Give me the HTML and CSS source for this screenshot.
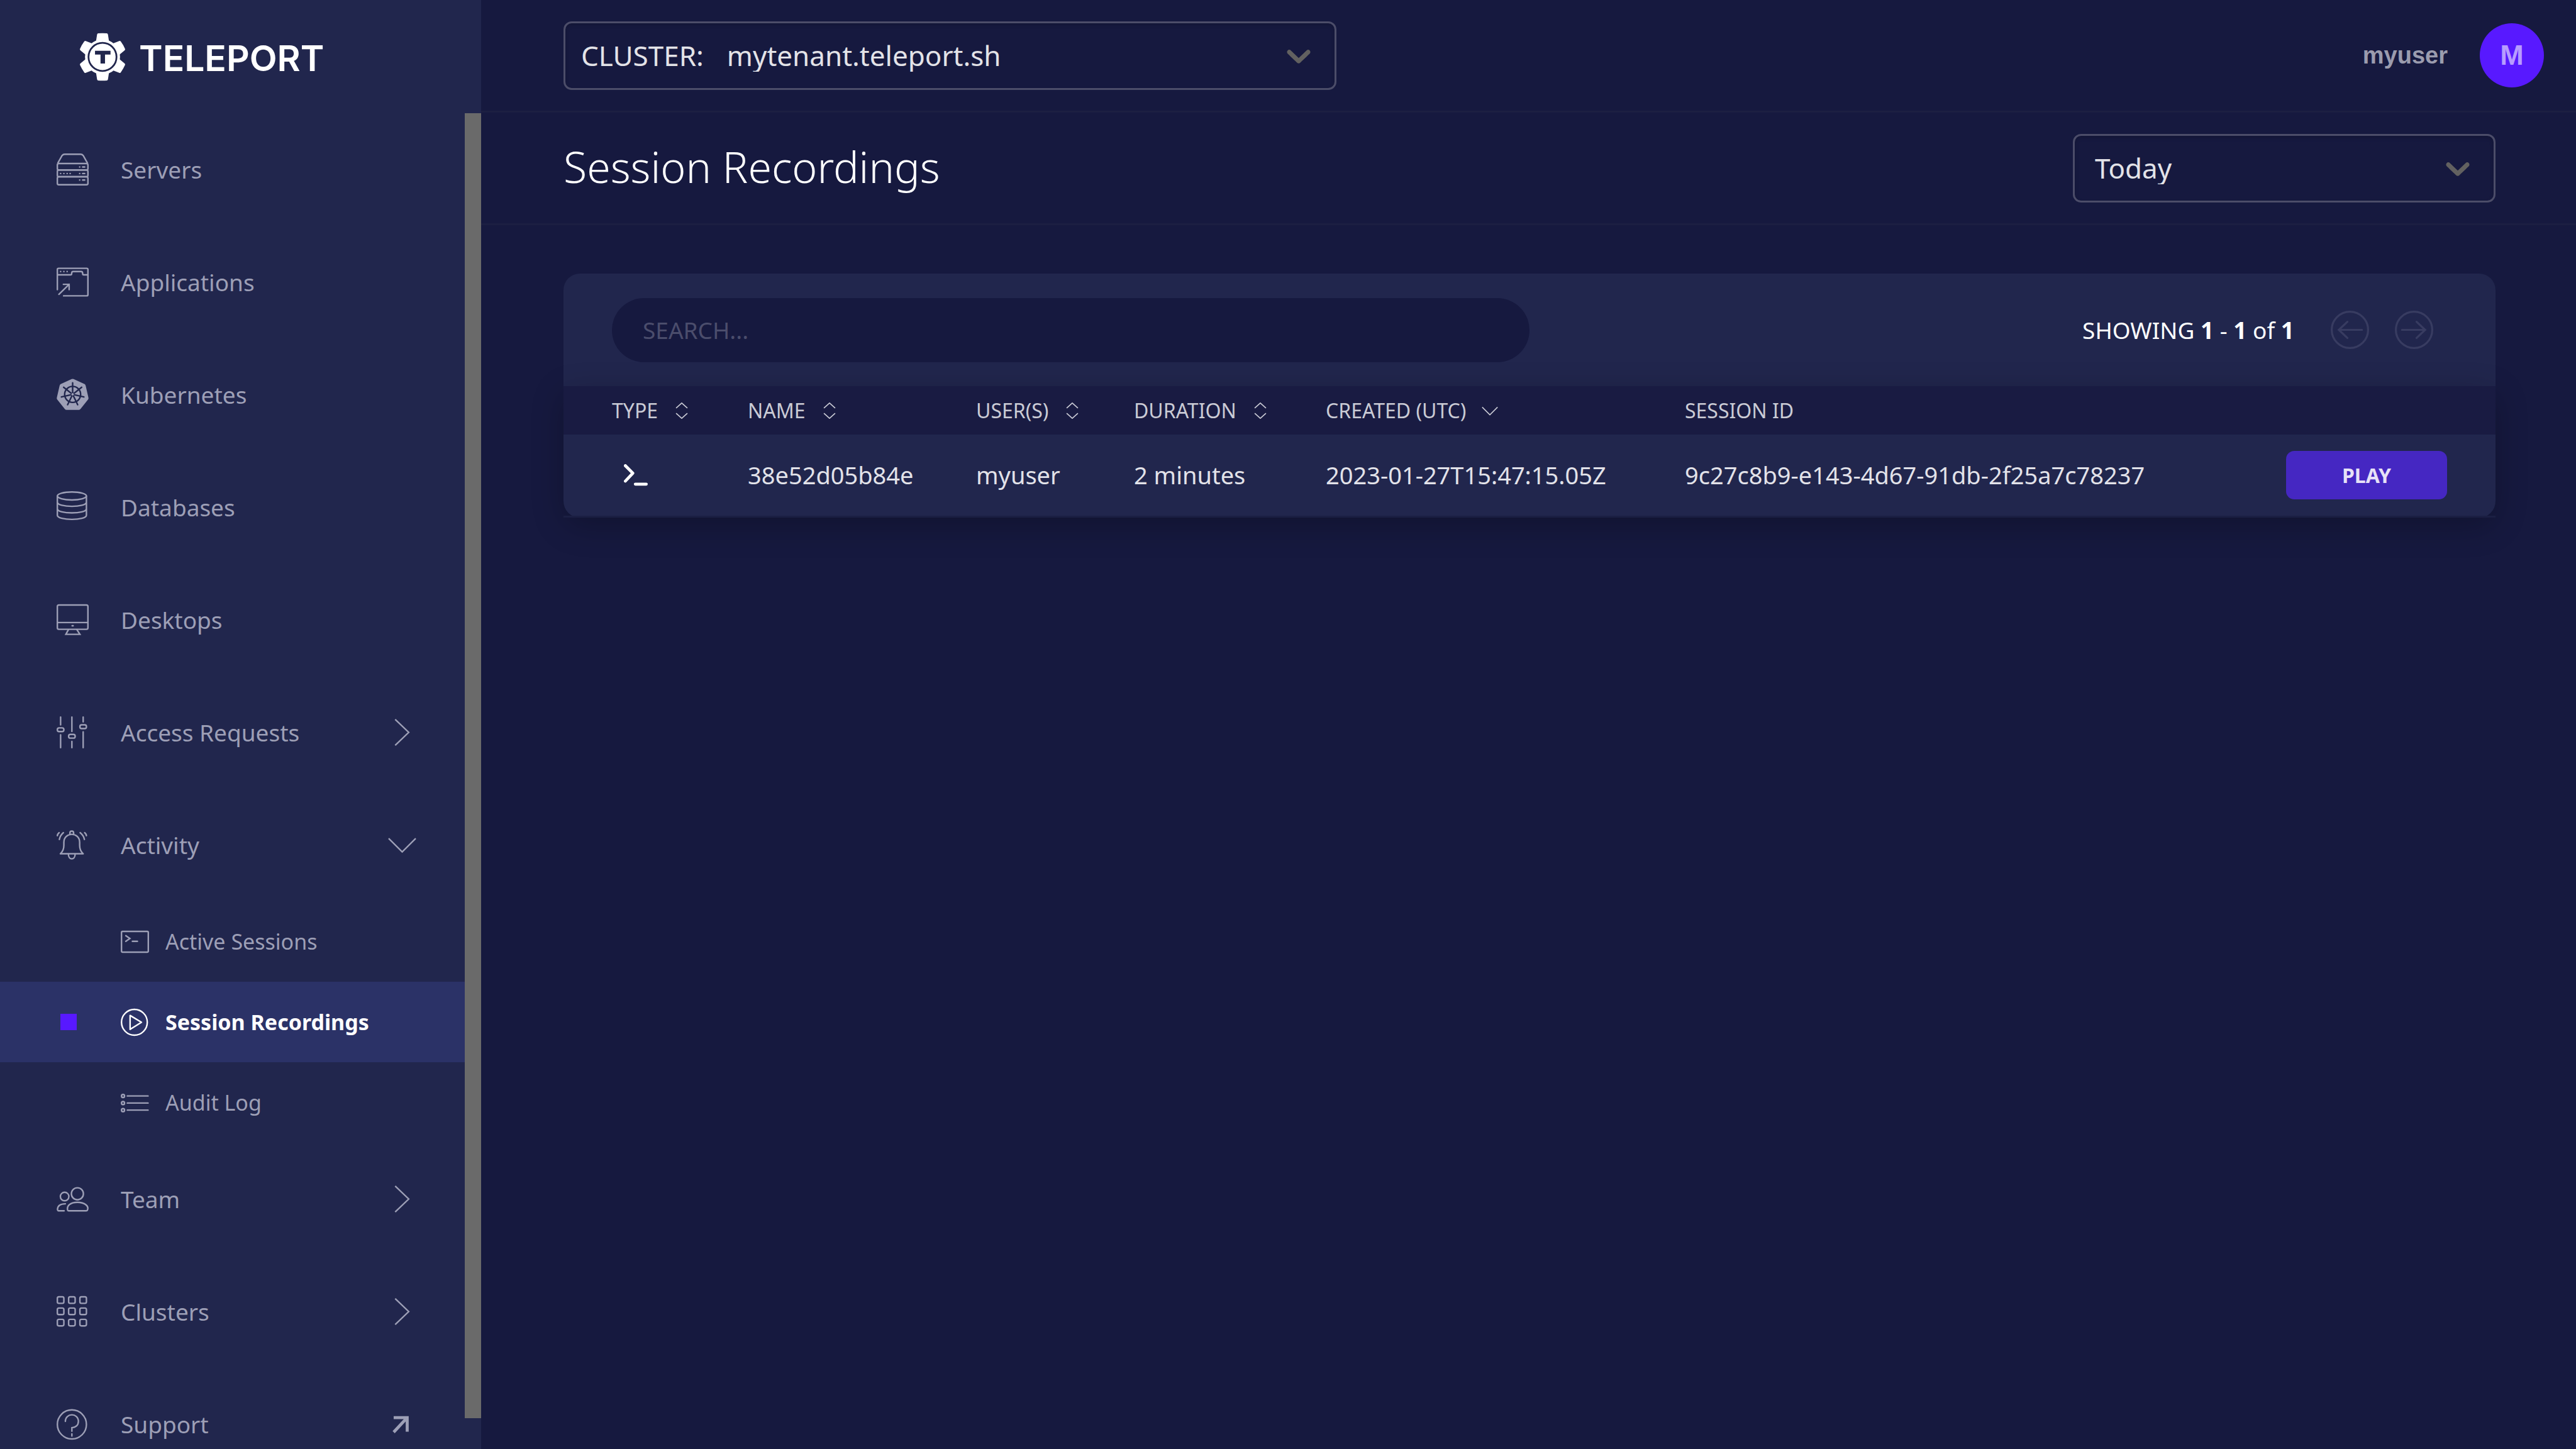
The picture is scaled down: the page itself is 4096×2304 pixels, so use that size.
FILE: index.html
```html
<!DOCTYPE html>
<html lang="en">
<head>
<meta charset="utf-8">
<title>Session Recordings</title>
<link rel="stylesheet" href="styles.css">
</head>
<body>
<div class="app">
  <aside class="sidebar">
    <a class="brand" href="#">
      <svg class="brand-mark" viewBox="0 0 88 94" aria-hidden="true">
        <g fill="#fff">
          <circle cx="44" cy="47" r="35"/>
          <path d="M35 0 Q44 -1 53 0 Q55 1 55 3 L57 16 H31 L33 3 Q33 1 35 0Z"/>
          <path d="M35 0 Q44 -1 53 0 Q55 1 55 3 L57 16 H31 L33 3 Q33 1 35 0Z" transform="rotate(60 44 47)"/>
          <path d="M35 0 Q44 -1 53 0 Q55 1 55 3 L57 16 H31 L33 3 Q33 1 35 0Z" transform="rotate(120 44 47)"/>
          <path d="M35 0 Q44 -1 53 0 Q55 1 55 3 L57 16 H31 L33 3 Q33 1 35 0Z" transform="rotate(180 44 47)"/>
          <path d="M35 0 Q44 -1 53 0 Q55 1 55 3 L57 16 H31 L33 3 Q33 1 35 0Z" transform="rotate(240 44 47)"/>
          <path d="M35 0 Q44 -1 53 0 Q55 1 55 3 L57 16 H31 L33 3 Q33 1 35 0Z" transform="rotate(300 44 47)"/>
        </g>
        <circle cx="44" cy="47" r="28" fill="none" stroke="#21264d" stroke-width="3.500"/>
        <path d="M29 34.700H60V42.300H49V60.300H40V42.300H29Z" fill="#21264d"/>
      </svg>
      <span class="brand-name">TELEPORT</span>
    </a>
    <div class="sidebar-body">
      <nav class="nav">
        <a class="nav-item" href="#">
          <svg class="icon" viewBox="0 0 64 64"><path d="M2 20 L11 4 Q13 1.500 16 1.500 H48 Q51 1.500 53 4 L62 20"/><rect x="1.500" y="20" width="61" height="13" rx="3"/><rect x="1.500" y="33" width="61" height="13.500" rx="3"/><rect x="1.500" y="46.500" width="61" height="16" rx="3"/><path stroke-linecap="round" d="M46 27h.1M52 27h4M46 40h.1M52 40h4M46 53h.1M52 53h4M8 40h.1M14.500 40h.1M21 40h.1M27 40h.1"/></svg>
          <span class="nav-label">Servers</span>
        </a>
        <a class="nav-item" href="#">
          <svg class="icon" viewBox="0 -3 64 64"><path stroke-linecap="round" d="M1.500 44 V4 Q1.500 1.500 4 1.500 H60 Q62.500 1.500 62.500 4 V54 Q62.500 56.500 60 56.500 H14 M2 14.500 H28 Q30 14.500 30 12 Q30 8 33 8 H49 Q52 8 52 12 Q52 14.500 54 14.500 H62 M4.500 53.500 L25 33.500 M13.500 33.500 H25 V44 M8 8h.1M14.500 8h.1M21 8h.1"/></svg>
          <span class="nav-label">Applications</span>
        </a>
        <a class="nav-item" href="#">
          <svg class="icon" viewBox="0 0 64 64"><path class="solid" d="M30 1 Q32 0 34 1 L56 11 Q57.500 12 58 14 L63.500 38 Q64 40 63 41.500 L47.500 61 Q46 62.500 44 62.500 H20 Q18 62.500 16.500 61 L1 41.500 Q0 40 .5 38 L6 14 Q6.500 12 8 11Z"/><g stroke="#21264d"><circle cx="32" cy="31.500" r="16"/><path stroke-linecap="round" d="M32 31.500V8.500M32 31.500L50 17.200M32 31.500L54.400 36.600M32 31.500L42 52.200M32 31.500L22 52.200M32 31.500L9.600 36.600M32 31.500L14 17.200"/></g><circle class="solid" cx="32" cy="31.500" r="2.500"/></svg>
          <span class="nav-label">Kubernetes</span>
        </a>
        <a class="nav-item" href="#">
          <svg class="icon" viewBox="0 0 64 64"><ellipse cx="30.500" cy="9.500" rx="29" ry="8"/><path d="M1.500 9.500V48C1.500 59 59.500 59 59.500 48V9.500M1.500 22C1.500 33 59.500 33 59.500 22M1.500 35C1.500 46 59.500 46 59.500 35"/></svg>
          <span class="nav-label">Databases</span>
        </a>
        <a class="nav-item" href="#">
          <svg class="icon" viewBox="0 -1 64 64"><rect x="1.500" y="1.500" width="61" height="48.500" rx="3"/><path d="M2 36.500H62M24 50L18.500 60H46.500L40 50"/><path stroke-linecap="round" d="M31 43h2"/></svg>
          <span class="nav-label">Desktops</span>
        </a>
        <button class="nav-item" type="button">
          <svg class="icon" viewBox="0 0 64 64"><path stroke-linecap="round" d="M8 1.500V17M8 37V62.500M30.500 1.500V30M30.500 50V62.500M53 1.500V11M53 31V62.500"/><rect x="1.500" y="23" width="13" height="7.500" rx="3.500"/><rect x="24" y="36" width="13" height="7.500" rx="3.500"/><rect x="46.500" y="17" width="13" height="7.500" rx="3.500"/></svg>
          <span class="nav-label">Access Requests</span>
          <svg class="icon" viewBox="0 0 64 64"><path d="M18 6L45 32L18 58"/></svg>
        </button>
        <button class="nav-item" type="button" aria-expanded="true">
          <svg class="icon" viewBox="0 -3 64 64"><path stroke-linecap="round" d="M7.500 46.500H53M8 46Q14.500 40 14.500 30V24C14.500 2.500 46 2.500 46 24V30Q46 40 52.500 46M26.500 8V5.500C26.500 0 34 0 34 5.500V8M23.500 47C23.500 60 37 60 37 47M13.500 4.500Q7 10 5.500 18M5 4.500Q2 7 1.500 10.500M47 4.500Q54 10 55.500 18M56 4.500Q59 7 59.500 10.500"/></svg>
          <span class="nav-label">Activity</span>
          <svg class="icon" viewBox="0 0 64 64"><path d="M5 19L32 46L59 19"/></svg>
        </button>
        <div class="subnav">
          <a class="sub-item" href="#">
            <svg class="icon-small" viewBox="0 -6 56 56"><rect x="1.500" y="1.500" width="53" height="41" rx="2"/><path stroke-linecap="round" d="M10 10L18 15.500L10 21M23 21H33"/></svg>
            <span>Active Sessions</span>
          </a>
          <a class="sub-item is-active" href="#" aria-current="page">
            <svg class="icon-small" viewBox="0 0 56 56"><circle cx="27" cy="28" r="25.500"/><path stroke-linejoin="round" d="M18.500 14.500V42L41 28Z"/></svg>
            <span>Session Recordings</span>
          </a>
          <a class="sub-item" href="#">
            <svg class="icon-small" viewBox="0 -10 56 56"><circle cx="4.500" cy="4.500" r="3"/><circle cx="4.500" cy="18.500" r="3"/><circle cx="4.500" cy="32.500" r="3"/><path stroke-linecap="round" d="M13 4.500H54M13 18.500H54M13 32.500H54"/></svg>
            <span>Audit Log</span>
          </a>
        </div>
        <button class="nav-item" type="button">
          <svg class="icon" viewBox="0 -8 64 64"><circle cx="41.500" cy="13.500" r="12"/><circle cx="16" cy="19" r="8.500"/><path stroke-linecap="round" d="M22 46C20 38 27 30.500 41.500 30.500S65 38 61.500 46Q61 47.500 59 47.500H24Q22.500 47.500 22 46ZM15 47.500H4Q2 47.500 1.800 45Q2 33.500 17.500 33.500"/></svg>
          <span class="nav-label">Team</span>
          <svg class="icon" viewBox="0 0 64 64"><path d="M18 6L45 32L18 58"/></svg>
        </button>
        <button class="nav-item" type="button">
          <svg class="icon" viewBox="0 -1 64 64"><rect x="1.500" y="1.500" width="13" height="13" rx="3"/><rect x="24" y="1.500" width="13" height="13" rx="3"/><rect x="46.500" y="1.500" width="13" height="13" rx="3"/><rect x="1.500" y="24" width="13" height="13" rx="3"/><rect x="24" y="24" width="13" height="13" rx="3"/><rect x="46.500" y="24" width="13" height="13" rx="3"/><rect x="1.500" y="46.500" width="13" height="13" rx="3"/><rect x="24" y="46.500" width="13" height="13" rx="3"/><rect x="46.500" y="46.500" width="13" height="13" rx="3"/></svg>
          <span class="nav-label">Clusters</span>
          <svg class="icon" viewBox="0 0 64 64"><path d="M18 6L45 32L18 58"/></svg>
        </button>
        <a class="nav-item" href="#">
          <svg class="icon" viewBox="0 -2 64 64"><circle cx="30.500" cy="30.500" r="29"/><path stroke-linecap="round" d="M17.500 24.500C17.500 7 43.500 7 43.500 24.500C43.500 33 37 36.500 30.500 37V44M30.500 49.500V53.500"/></svg>
          <span class="nav-label">Support</span>
          <svg class="icon" viewBox="0 0 64 64"><path stroke-width="6" d="M15 19H42V47M42 19L15 48"/></svg>
        </a>
      </nav>
      <div class="scroll-track"><div class="scroll-thumb"></div></div>
    </div>
  </aside>

  <main class="main">
    <header class="topbar">
      <div class="select-box cluster-box">
        <label for="cluster">CLUSTER:</label>
        <select id="cluster"><option>mytenant.teleport.sh</option></select>
        <svg class="select-arrow" viewBox="0 0 20 20"><path d="M4.516 7.548c0.436-0.446 1.043-0.481 1.576 0l3.908 3.747 3.908-3.747c0.533-0.481 1.141-0.446 1.574 0 0.436 0.445 0.408 1.197 0 1.615-0.406 0.418-4.695 4.502-4.695 4.502-0.217 0.223-0.502 0.335-0.787 0.335s-0.570-0.112-0.789-0.335c0 0-4.287-4.084-4.695-4.502s-0.436-1.170 0-1.615z"/></svg>
      </div>
      <button class="user" type="button">
        <span>myuser</span>
        <span class="avatar">M</span>
      </button>
    </header>

    <div class="page-head">
      <h1>Session Recordings</h1>
      <div class="select-box range-box">
        <select aria-label="Time range"><option>Today</option></select>
        <svg class="select-arrow" viewBox="0 0 20 20"><path d="M4.516 7.548c0.436-0.446 1.043-0.481 1.576 0l3.908 3.747 3.908-3.747c0.533-0.481 1.141-0.446 1.574 0 0.436 0.445 0.408 1.197 0 1.615-0.406 0.418-4.695 4.502-4.695 4.502-0.217 0.223-0.502 0.335-0.787 0.335s-0.570-0.112-0.789-0.335c0 0-4.287-4.084-4.695-4.502s-0.436-1.170 0-1.615z"/></svg>
      </div>
    </div>

    <section class="content">
      <div class="panel">
        <input class="search" type="text" placeholder="SEARCH..." aria-label="Search">
        <div class="pager">
          <span class="pager-text">SHOWING <b>1</b> - <b>1</b> of <b>1</b></span>
          <button class="pager-btn" type="button" aria-label="Previous page" disabled>
            <svg viewBox="0 0 76 76"><circle cx="38" cy="38" r="36"/><path d="M62 38H16M33 22L16 38L33 54"/></svg>
          </button>
          <button class="pager-btn" type="button" aria-label="Next page" disabled>
            <svg viewBox="0 0 76 76"><circle cx="38" cy="38" r="36"/><path d="M14 38H60M43 22L60 38L43 54"/></svg>
          </button>
        </div>
      </div>
      <table class="grid">
        <colgroup>
          <col class="col-type"><col class="col-name"><col class="col-users"><col class="col-duration"><col class="col-created"><col><col class="col-action">
        </colgroup>
        <thead>
          <tr>
            <th><span class="sort">TYPE<svg viewBox="0 0 32 32"><path d="M5 11L16 1L27 11M5 21L16 31L27 21"/></svg></span></th>
            <th><span class="sort">NAME<svg viewBox="0 0 32 32"><path d="M5 11L16 1L27 11M5 21L16 31L27 21"/></svg></span></th>
            <th><span class="sort">USER(S)<svg viewBox="0 0 32 32"><path d="M5 11L16 1L27 11M5 21L16 31L27 21"/></svg></span></th>
            <th><span class="sort">DURATION<svg viewBox="0 0 32 32"><path d="M5 11L16 1L27 11M5 21L16 31L27 21"/></svg></span></th>
            <th><span class="sort">CREATED (UTC)<svg viewBox="0 0 32 32"><path d="M1 9L16 24L31 9"/></svg></span></th>
            <th>SESSION ID</th>
            <th></th>
          </tr>
        </thead>
        <tbody>
          <tr>
            <td><svg class="type-icon" viewBox="0 0 48 44" role="img" aria-label="SSH session"><path d="M3 3L18 18L3 34M23 40H45"/></svg></td>
            <td>38e52d05b84e</td>
            <td>myuser</td>
            <td>2 minutes</td>
            <td>2023-01-27T15:47:15.05Z</td>
            <td>9c27c8b9-e143-4d67-91db-2f25a7c78237</td>
            <td><button class="play" type="button">PLAY</button></td>
          </tr>
        </tbody>
      </table>
    </section>
  </main>
</div>
</body>
</html>
```
FILE: styles.css
```css
* {
  box-sizing: border-box;
}

body {
  margin: 0;
  background: #16193f;
  color: #fff;
  font-family: "Noto Sans", "Open Sans", sans-serif;
  font-size: 37px;
  line-height: 51px;
}

button,
input,
select {
  margin: 0;
  padding: 0;
  border: 0;
  background: none;
  color: inherit;
  font: inherit;
}

a {
  color: inherit;
  text-decoration: none;
}

.app {
  display: flex;
  height: 100vh;
  overflow: hidden;
}

/* Sidebar */

.sidebar {
  display: flex;
  flex: none;
  flex-direction: column;
  width: 765px;
  background: #21264d;
}

.brand {
  display: flex;
  flex: none;
  align-items: center;
  gap: 23px;
  height: 180px;
  padding-left: 128px;
}

.brand-mark {
  width: 70px;
  height: 75px;
  overflow: visible;
}

.brand-name {
  padding-top: 4px;
  font-family: Inter, sans-serif;
  font-size: 57px;
  font-weight: 600;
}

.sidebar-body {
  display: flex;
  flex: 1;
  min-height: 0;
}

.nav {
  flex: 1;
  overflow: hidden;
  color: #9d9fb6;
}

.nav-item {
  display: flex;
  align-items: center;
  gap: 51px;
  width: 100%;
  height: 179px;
  padding: 0 74px 0 90px;
  text-align: left;
}

.nav-label {
  flex: 1;
}

.icon,
.icon-small {
  flex: none;
  width: 51px;
  height: 51px;
  fill: none;
  stroke: currentColor;
  stroke-width: 3;
}

.icon-small {
  width: 45px;
  height: 45px;
}

.icon .solid {
  fill: currentColor;
  stroke: none;
}

.sub-item {
  display: flex;
  align-items: center;
  gap: 26px;
  height: 128px;
  padding-left: 192px;
  font-size: 34px;
}

.sub-item.is-active {
  padding-left: 96px;
  background: #2b3267;
  color: #fff;
  font-weight: 700;
}

.sub-item.is-active::before {
  width: 26px;
  height: 26px;
  margin-right: 44px;
  background: #5819ff;
  content: "";
}

.scroll-track {
  flex: none;
  width: 26px;
}

.scroll-thumb {
  height: 97.7%;
  background: #6a6a6a;
}

/* Top bars */

.main {
  flex: 1;
  min-width: 0;
}

.topbar,
.page-head {
  display: flex;
  align-items: center;
  justify-content: space-between;
  height: 179px;
  border-bottom: 3px solid #1c1f42;
}

.topbar {
  padding: 0 51px 0 131px;
}

.page-head {
  padding: 0 128px 0 131px;
}

h1 {
  margin: 0;
  padding-bottom: 4px;
  font-size: 68px;
  font-weight: 300;
  line-height: 90px;
}

.select-box {
  position: relative;
  display: flex;
  align-items: center;
  gap: 37px;
  height: 109px;
  border: 3px solid #4c4d69;
  border-radius: 13px;
  box-shadow: inset 0 3px 6px rgba(0, 0, 0, 0.15);
  color: #e3e3e8;
  font-size: 44px;
}

.cluster-box {
  width: 1229px;
  padding-left: 25px;
}

.range-box {
  width: 672px;
  padding-left: 32px;
}

.select-box select {
  flex: 1;
  height: 100%;
  appearance: none;
  outline: none;
}

.select-arrow {
  position: absolute;
  top: 50%;
  right: 25px;
  width: 64px;
  height: 64px;
  margin-top: -32px;
  fill: #626160;
  pointer-events: none;
}

.user {
  display: flex;
  align-items: center;
  gap: 51px;
  color: #9b9cae;
  font-family: "Liberation Sans", Arial, sans-serif;
  font-size: 38px;
  font-weight: 700;
}

.avatar {
  width: 102px;
  height: 102px;
  border-radius: 50%;
  background: #5819ff;
  color: #b79cff;
  font-size: 45px;
  line-height: 102px;
  text-align: center;
}

/* Recordings */

.content {
  padding: 77px 128px 0 131px;
}

.panel {
  display: flex;
  align-items: center;
  justify-content: space-between;
  height: 179px;
  padding: 0 77px;
  border-radius: 26px 26px 0 0;
  background: #21264d;
}

.search {
  width: 50%;
  height: 102px;
  padding: 0 49px;
  border-radius: 51px;
  background: #16193f;
  outline: none;
}

.search::placeholder {
  color: #4b4d6c;
  opacity: 1;
}

.pager {
  display: flex;
  align-items: center;
  gap: 41px;
  padding-right: 22px;
}

.pager-text {
  margin-right: 17px;
}

.pager-btn {
  width: 61px;
  height: 61px;
}

.pager-btn svg {
  display: block;
  fill: none;
  stroke: #383c61;
  stroke-width: 4;
  stroke-linecap: round;
}

.grid {
  width: 100%;
  border-collapse: collapse;
  border-radius: 0 0 26px 26px;
  background: #21264d;
  box-shadow: 0 13px 51px rgba(0, 0, 0, 0.24);
  table-layout: fixed;
}

.col-type { width: 293px; }
.col-name { width: 363px; }
.col-users { width: 251px; }
.col-duration { width: 305px; }
.col-created { width: 571px; }
.col-action { width: 333px; }

.grid th,
.grid td {
  padding: 0;
  text-align: left;
  white-space: nowrap;
}

.grid th {
  height: 77px;
  background: #191b42;
  color: #cacbd5;
  font-size: 32px;
  font-weight: 400;
}

.grid td {
  height: 130px;
  border-bottom: 3px solid #1b1f43;
  color: #e2e2e9;
  font-size: 38px;
}

.grid th:first-child,
.grid td:first-child {
  padding-left: 77px;
}

.sort {
  display: flex;
  align-items: center;
  gap: 25px;
}

.sort svg {
  width: 26px;
  height: 26px;
  fill: none;
  stroke: currentColor;
  stroke-width: 2;
}

.type-icon {
  display: block;
  width: 38px;
  height: 35px;
  margin-left: 19px;
  fill: none;
  stroke: #fff;
  stroke-width: 6;
  stroke-linecap: round;
  stroke-linejoin: round;
}

.play {
  display: block;
  width: 256px;
  height: 77px;
  border-radius: 13px;
  background: #4527c2;
  color: #e6e1f7;
  font-size: 32px;
  font-weight: 700;
}
```
